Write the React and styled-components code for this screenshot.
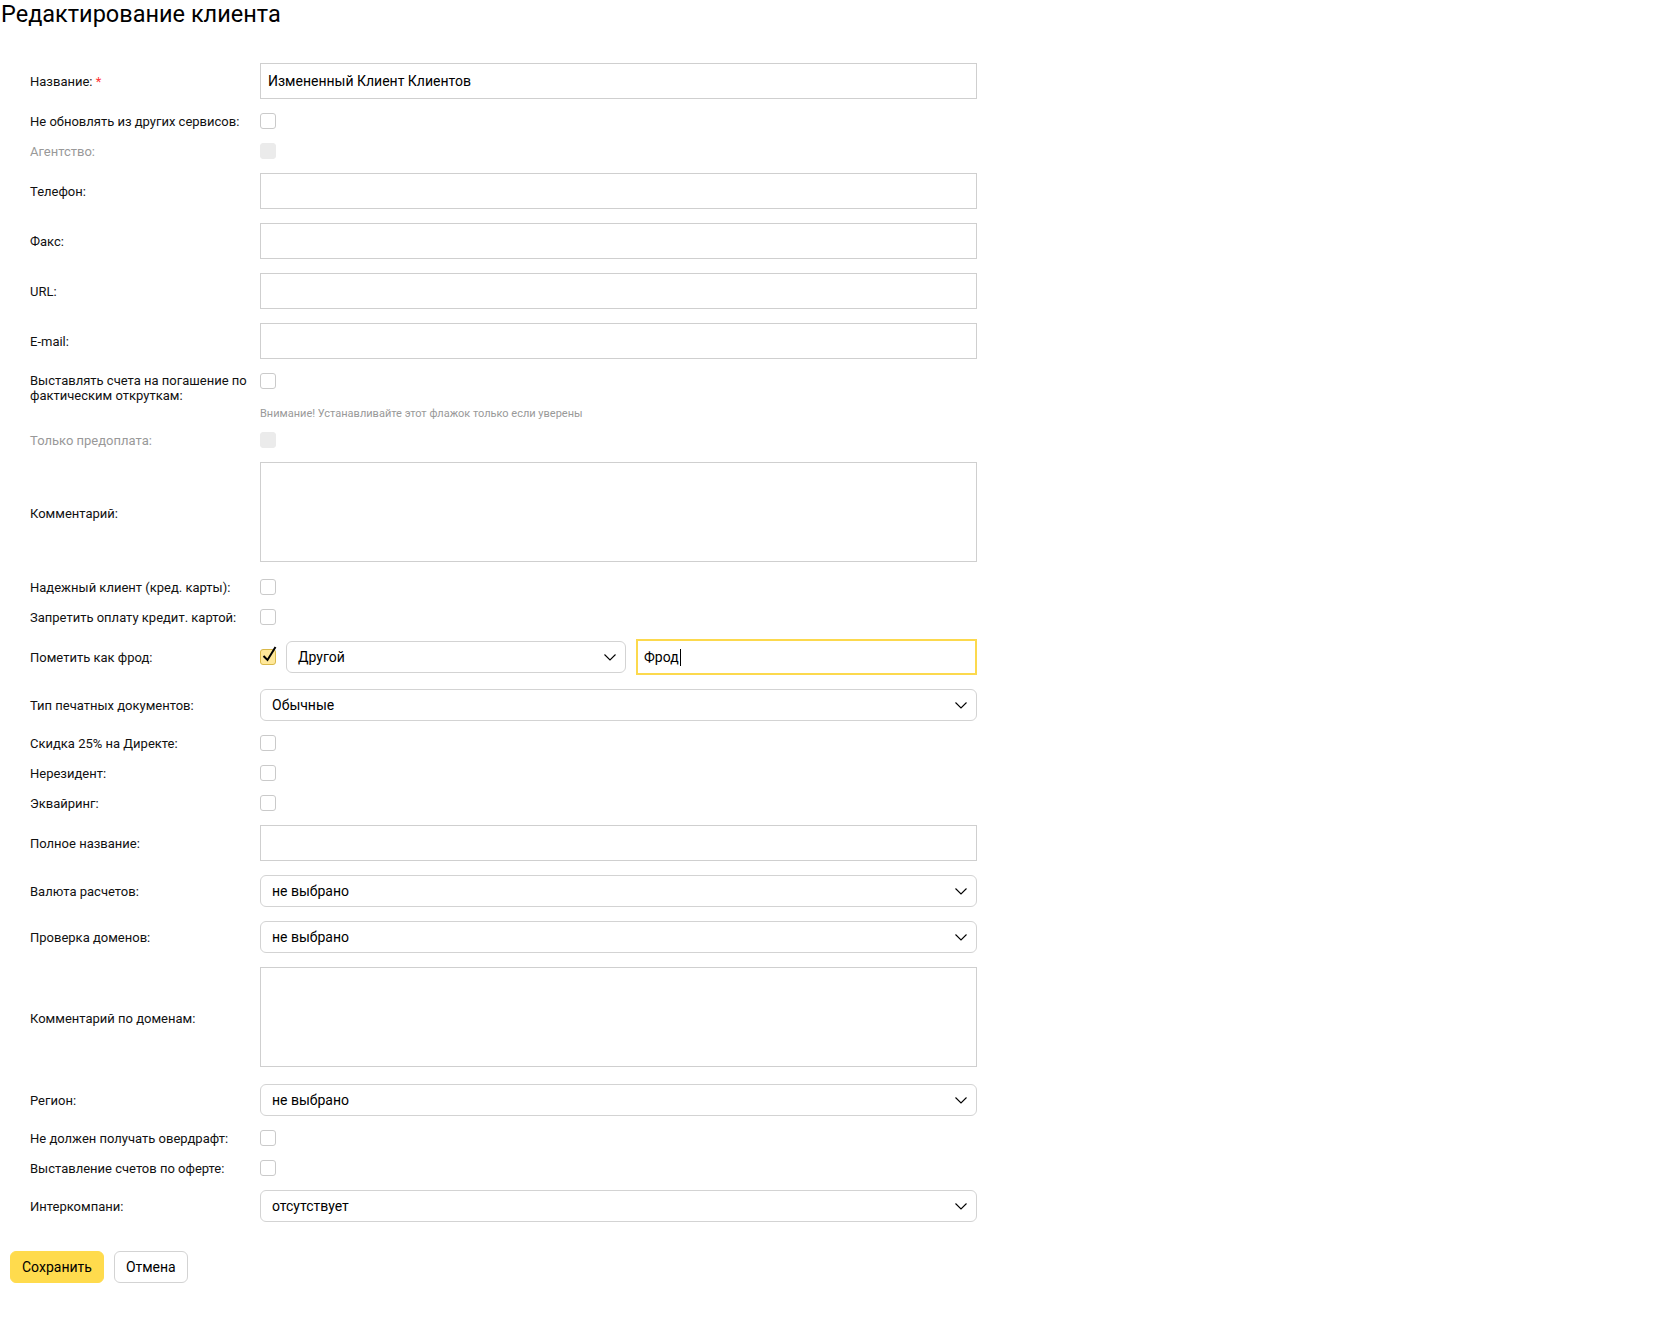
import React from 'react';
import styled, { createGlobalStyle } from 'styled-components';

const GlobalStyle = createGlobalStyle`
    body {
        margin: 0;
        background: #fff;
        font-family: Roboto, "Liberation Sans", Arial, sans-serif;
        color: #000;
    }
`;

const Page = styled.div`
    width: 1676px;
    min-height: 1318px;
`;

const Title = styled.h1`
    margin: 0;
    padding-left: 1px;
    font-size: 23.5px;
    line-height: 28px;
    font-weight: 400;
`;

const Form = styled.div`
    display: flex;
    flex-direction: column;
    gap: 14px;
    margin-top: 35px;
    padding-left: 30px;
`;

const Row = styled.div`
    display: grid;
    grid-template-columns: 230px 717px;
    align-items: ${p => (p.$top ? 'start' : 'center')};
`;

const Label = styled.div`
    font-size: 13px;
    line-height: 15px;
    padding-right: 2px;
    color: ${p => (p.$disabled ? '#999' : '#111')};
`;

const Required = styled.span`
    color: #f33;
`;

const Control = styled.div`
    display: flex;
    align-items: center;
`;

const FraudControl = styled.div`
    display: grid;
    grid-template-columns: 16px 340px 1fr;
    column-gap: 10px;
    align-items: center;
`;

const Stack = styled.div`
    display: flex;
    flex-direction: column;
    align-items: flex-start;
`;

const Input = styled.input`
    box-sizing: border-box;
    width: 100%;
    height: 36px;
    margin: 0;
    padding: 0 7px;
    border: 1px solid #cfcfcf;
    border-radius: 0;
    outline: none;
    font-family: inherit;
    font-size: 14px;
    color: #000;
`;

const FocusField = styled.div`
    box-sizing: border-box;
    display: flex;
    align-items: center;
    height: 36px;
    padding: 0 6px;
    border: 2px solid #fcd94d;
    font-size: 14px;
`;

const Caret = styled.span`
    display: inline-block;
    width: 1px;
    height: 17px;
    margin-left: 1px;
    background: #000;
`;

const TextArea = styled.textarea`
    display: block;
    box-sizing: border-box;
    width: 100%;
    height: 100px;
    margin: 0 0 3px;
    border: 1px solid #cfcfcf;
    border-radius: 0;
    resize: none;
    outline: none;
    font-family: inherit;
`;

const Box = styled.span`
    position: relative;
    flex: none;
    box-sizing: border-box;
    width: 16px;
    height: 16px;
    border-radius: 3px;
    border: 1px solid ${p => (p.$checked ? '#d9b84a' : p.$disabled ? '#ebebeb' : '#cacaca')};
    background: ${p => (p.$checked ? '#ffe89a' : p.$disabled ? '#ebebeb' : '#fff')};
    svg {
        position: absolute;
        left: 1px;
        top: -4px;
    }
`;

const Hint = styled.div`
    margin-top: 19px;
    margin-bottom: -2px;
    font-size: 11px;
    line-height: 12px;
    color: #999;
`;

const SelectBox = styled.div`
    box-sizing: border-box;
    width: 100%;
    height: 32px;
    display: flex;
    align-items: center;
    justify-content: space-between;
    padding: 0 9px 0 11px;
    border: 1px solid #d3d3d3;
    border-radius: 6px;
    font-size: 14px;
    color: #000;
`;

const Buttons = styled.div`
    display: flex;
    gap: 10px;
    margin-top: 29px;
    padding-left: 10px;
`;

const Button = styled.button`
    height: 32px;
    padding: 0 11px;
    border-radius: 6px;
    border: 1px solid ${p => (p.$primary ? '#ffdb4d' : '#d3d3d3')};
    background: ${p => (p.$primary ? '#ffdb4d' : '#fff')};
    font-family: inherit;
    font-size: 14px;
    color: #000;
    cursor: pointer;
`;

const Chevron = () => (
    <svg width="12" height="7" viewBox="0 0 12 7" fill="none">
        <path d="M0.5 0.5L6 6L11.5 0.5" stroke="#000" strokeWidth="1.1" />
    </svg>
);

const Check = () => (
    <svg width="15" height="17" viewBox="0 0 15 17" fill="none">
        <path d="M1.5 10L5.5 14L13.5 1" stroke="#000" strokeWidth="2" strokeLinejoin="miter" />
    </svg>
);

const Checkbox = ({ checked, disabled }) => (
    <Box $checked={checked} $disabled={disabled}>{checked && <Check />}</Box>
);

const Select = ({ value }) => (
    <SelectBox>
        <span>{value}</span>
        <Chevron />
    </SelectBox>
);

const Field = ({ label, disabled, top, children }) => (
    <Row $top={top}>
        <Label $disabled={disabled}>{label}</Label>
        {children}
    </Row>
);

export default function App() {
    return (
        <Page>
            <GlobalStyle />
            <Title>Редактирование клиента</Title>
            <Form>
                <Field label={<>Название: <Required>*</Required></>}>
                    <Input defaultValue="Измененный Клиент Клиентов" />
                </Field>
                <Field label="Не обновлять из других сервисов:"><Control><Checkbox /></Control></Field>
                <Field label="Агентство:" disabled><Control><Checkbox disabled /></Control></Field>
                <Field label="Телефон:"><Input /></Field>
                <Field label="Факс:"><Input /></Field>
                <Field label="URL:"><Input /></Field>
                <Field label="E-mail:"><Input /></Field>
                <Field label="Выставлять счета на погашение по фактическим откруткам:" top>
                    <Stack>
                        <Checkbox />
                        <Hint>Внимание! Устанавливайте этот флажок только если уверены</Hint>
                    </Stack>
                </Field>
                <Field label="Только предоплата:" disabled><Control><Checkbox disabled /></Control></Field>
                <Field label="Комментарий:"><TextArea /></Field>
                <Field label="Надежный клиент (кред. карты):"><Control><Checkbox /></Control></Field>
                <Field label="Запретить оплату кредит. картой:"><Control><Checkbox /></Control></Field>
                <Field label="Пометить как фрод:">
                    <FraudControl>
                        <Checkbox checked />
                        <Select value="Другой" />
                        <FocusField>Фрод<Caret /></FocusField>
                    </FraudControl>
                </Field>
                <Field label="Тип печатных документов:"><Select value="Обычные" /></Field>
                <Field label="Скидка 25% на Директе:"><Control><Checkbox /></Control></Field>
                <Field label="Нерезидент:"><Control><Checkbox /></Control></Field>
                <Field label="Эквайринг:"><Control><Checkbox /></Control></Field>
                <Field label="Полное название:"><Input /></Field>
                <Field label="Валюта расчетов:"><Select value="не выбрано" /></Field>
                <Field label="Проверка доменов:"><Select value="не выбрано" /></Field>
                <Field label="Комментарий по доменам:"><TextArea /></Field>
                <Field label="Регион:"><Select value="не выбрано" /></Field>
                <Field label="Не должен получать овердрафт:"><Control><Checkbox /></Control></Field>
                <Field label="Выставление счетов по оферте:"><Control><Checkbox /></Control></Field>
                <Field label="Интеркомпани:"><Select value="отсутствует" /></Field>
            </Form>
            <Buttons>
                <Button $primary>Сохранить</Button>
                <Button>Отмена</Button>
            </Buttons>
        </Page>
    );
}
